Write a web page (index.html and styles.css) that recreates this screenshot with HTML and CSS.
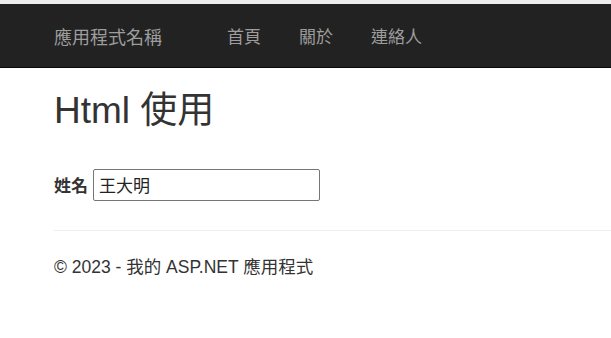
FILE: index.html
```html
<!DOCTYPE html>
<html lang="zh-Hant">
<head>
    <meta charset="UTF-8">
    <meta name="viewport" content="width=device-width, initial-scale=1.0">
    <title>Html 使用 - 我的 ASP.NET 應用程式</title>
    <link rel="stylesheet" href="styles.css">
</head>
<body>

    <!-- 導覽列 -->
    <div class="navbar">
        <a class="navbar-brand" href="#">應用程式名稱</a>
        <ul class="nav">
            <li><a href="#">首頁</a></li>
            <li><a href="#">關於</a></li>
            <li><a href="#">連絡人</a></li>
        </ul>
    </div>

    <div class="body-content">
        <h1>Html 使用</h1>

        <div class="form-row">
            <label for="name">姓名</label>
            <input type="text" id="name" name="name" value="王大明">
        </div>

        <hr>
        <footer>
            <p>&copy; 2023 - 我的 ASP.NET 應用程式</p>
        </footer>
    </div>

</body>
</html>
```

FILE: styles.css
```css
body {
    margin: 0;
    border-top: 4px solid #ededed;
    font-family: "Liberation Sans", Arial, "Noto Sans CJK TC", sans-serif;
    font-size: 17px;
    color: #333;
    background-color: #fff;
}

.navbar {
    display: flex;
    align-items: center;
    height: 64px;
    padding-left: 54px;
    background-color: #222;
    border-bottom: 1px solid #080808;
    box-sizing: border-box;
}

.navbar-brand {
    font-size: 18px;
    color: #9d9d9d;
    text-decoration: none;
    margin-right: 46px;
}

.nav {
    display: flex;
    list-style: none;
    margin: 0;
    padding: 0;
}

.nav a {
    display: block;
    padding: 0 19px;
    font-size: 17px;
    color: #9d9d9d;
    text-decoration: none;
}

.body-content {
    padding-left: 54px;
}

h1 {
    font-size: 37px;
    font-weight: normal;
    line-height: 1.1;
    margin: 23px 0 0;
}

.form-row {
    display: flex;
    align-items: center;
    margin-top: 37px;
}

.form-row label {
    font-weight: bold;
    margin-right: 5px;
}

.form-row input[type="text"] {
    width: 227px;
    height: 32px;
    box-sizing: border-box;
    padding: 1px 5px;
    border: 1px solid #767676;
    border-radius: 2px;
    font-family: inherit;
    font-size: 17px;
    color: #222;
}

hr {
    margin: 29px 0 0;
    border: 0;
    border-top: 1px solid #eee;
}

footer p {
    margin: 24px 0 0;
    font-size: 17.5px;
    line-height: 24px;
}
```
